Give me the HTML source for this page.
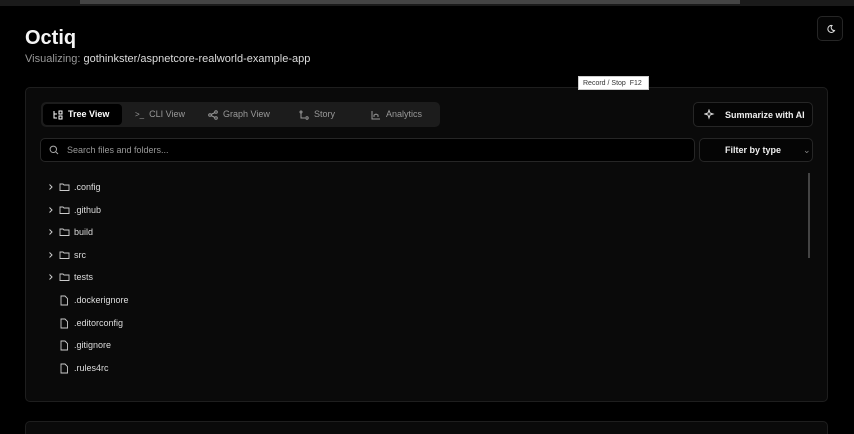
<!DOCTYPE html>
<html style="height:434px;overflow:hidden"><head><style>
*{box-sizing:border-box;margin:0;padding:0}
body{width:854px;height:434px;background:#000;font-family:"Liberation Sans",sans-serif;color:#eee;position:relative;overflow:hidden}
.abs{position:absolute}
.topbar{left:0;top:0;width:854px;height:6px;background:#1a1a1a}
.topbar2{left:80px;top:0;width:660px;height:4px;background:#444}
h1{position:absolute;left:25px;top:27px;font-size:20px;font-weight:bold;color:#f5f5f5}
.sub{left:25px;top:53px;font-size:11px;color:#999}
.sub b{color:#ddd;font-weight:normal}
.moon{left:817px;top:16px;width:26px;height:25px;border:1px solid #262626;border-radius:5px;background:#050505}
.tip{left:578px;top:76px;width:71px;height:14px;background:#fff;color:#333;font-size:7px;line-height:13px;padding-left:4px;border:1px solid #ccc}
.card{left:25px;top:87px;width:803px;height:315px;background:#0a0a0a;border:1px solid #1e1e1e;border-radius:5px}
.card2{left:25px;top:421px;width:803px;height:13px;background:#0a0a0a;border:1px solid #1e1e1e;border-bottom:none;border-radius:5px 5px 0 0}
.tabs{left:41px;top:102px;width:399px;height:25px;background:#1c1c1c;border-radius:5px}
.tab{position:absolute;top:2px;height:21px;font-size:9px;color:#999;line-height:21px;display:flex;align-items:center;gap:5px}
.tab.act{background:#000;color:#fff;font-weight:bold;border-radius:4px;left:2px;width:79px;padding-left:10px}
.btn{border:1px solid #262626;border-radius:5px;background:#050505;font-size:9px;font-weight:bold;color:#eee;display:flex;align-items:center}
.search{left:40px;top:138px;width:655px;height:24px;border:1px solid #262626;border-radius:5px;background:#000;font-size:9px;color:#999;display:flex;align-items:center;padding-left:8px;gap:8px}
.row{position:absolute;left:46px;font-size:9px;color:#ddd;display:flex;align-items:center;height:12px}
.row svg{flex:none}
.sb{left:808px;top:173px;width:2px;height:85px;background:#444}
</style></head><body>
<div class="abs topbar"></div><div class="abs topbar2"></div>
<h1>Octiq</h1>
<div class="abs sub">Visualizing: <b>gothinkster/aspnetcore-realworld-example-app</b></div>
<div class="abs moon"><svg width="24" height="23" viewBox="0 0 24 23"><path d="M14 8.5a3.5 3.5 0 1 0 2.5 5A3 3 0 0 1 14 8.5z" fill="none" stroke="#ddd" stroke-width="1"/></svg></div>
<div class="abs card"></div>
<div class="abs card2"></div>
<div class="abs tip">Record / Stop &nbsp;F12</div>
<div class="abs tabs">
 <div class="tab act"><svg width="10" height="10" viewBox="0 0 10 10" fill="none" stroke="#fff" stroke-width="1"><path d="M1 1v7h3M1 4h3M6 1h3v3H6zM6 6h3v3H6z"/></svg>Tree View</div>
 <div class="tab" style="left:94px"><span style="font-size:8px">&gt;_</span> CLI View</div>
 <div class="tab" style="left:167px"><svg width="10" height="10" viewBox="0 0 10 10" fill="none" stroke="#999" stroke-width="1"><circle cx="2" cy="5" r="1.3"/><circle cx="8" cy="2" r="1.3"/><circle cx="8" cy="8" r="1.3"/><path d="M3 4.5l4-2M3 5.5l4 2"/></svg>Graph View</div>
 <div class="tab" style="left:258px"><svg width="10" height="10" viewBox="0 0 10 10" fill="none" stroke="#999" stroke-width="1"><circle cx="2" cy="2" r="1"/><circle cx="8" cy="8" r="1.2"/><path d="M2 3v5h4"/></svg>Story</div>
 <div class="tab" style="left:330px"><svg width="10" height="10" viewBox="0 0 10 10" fill="none" stroke="#999" stroke-width="1"><path d="M1 1v8h8M3 7V5l2-1 2 1v2"/></svg>Analytics</div>
</div>
<div class="abs btn" style="left:693px;top:102px;width:120px;height:25px;padding-left:10px;gap:10px"><svg width="11" height="11" viewBox="0 0 11 11" fill="none" stroke="#ddd" stroke-width="1"><path d="M5 1l1 3 3 1-3 1-1 3-1-3-3-1 3-1z"/></svg>Summarize with AI</div>
<div class="abs search"><svg width="10" height="10" viewBox="0 0 10 10" fill="none" stroke="#aaa" stroke-width="1"><circle cx="4.3" cy="4.3" r="3.2"/><path d="M6.8 6.8L9 9"/></svg>Search files and folders...</div>
<div class="abs btn" style="left:699px;top:138px;width:114px;height:24px;padding-left:25px;justify-content:flex-start">Filter by type<span style="margin-left:22px;color:#888;font-weight:normal">&#8964;</span></div>
<div class="abs sb"></div>
<div class="row" style="top:181px"><svg width="10" height="10" viewBox="0 0 10 10"><path d="M3.5 2.5l2.5 2.5-2.5 2.5" stroke="#ccc" fill="none"/></svg><svg style="margin-left:3px" width="11" height="10" viewBox="0 0 11 10"><path d="M1 2h3l1 1h5v5.5H1z" stroke="#ccc" fill="none" stroke-width=".9"/></svg><span style="margin-left:4px">.config</span></div>
<div class="row" style="top:204px"><svg width="10" height="10" viewBox="0 0 10 10"><path d="M3.5 2.5l2.5 2.5-2.5 2.5" stroke="#ccc" fill="none"/></svg><svg style="margin-left:3px" width="11" height="10" viewBox="0 0 11 10"><path d="M1 2h3l1 1h5v5.5H1z" stroke="#ccc" fill="none" stroke-width=".9"/></svg><span style="margin-left:4px">.github</span></div>
<div class="row" style="top:226px"><svg width="10" height="10" viewBox="0 0 10 10"><path d="M3.5 2.5l2.5 2.5-2.5 2.5" stroke="#ccc" fill="none"/></svg><svg style="margin-left:3px" width="11" height="10" viewBox="0 0 11 10"><path d="M1 2h3l1 1h5v5.5H1z" stroke="#ccc" fill="none" stroke-width=".9"/></svg><span style="margin-left:4px">build</span></div>
<div class="row" style="top:249px"><svg width="10" height="10" viewBox="0 0 10 10"><path d="M3.5 2.5l2.5 2.5-2.5 2.5" stroke="#ccc" fill="none"/></svg><svg style="margin-left:3px" width="11" height="10" viewBox="0 0 11 10"><path d="M1 2h3l1 1h5v5.5H1z" stroke="#ccc" fill="none" stroke-width=".9"/></svg><span style="margin-left:4px">src</span></div>
<div class="row" style="top:271px"><svg width="10" height="10" viewBox="0 0 10 10"><path d="M3.5 2.5l2.5 2.5-2.5 2.5" stroke="#ccc" fill="none"/></svg><svg style="margin-left:3px" width="11" height="10" viewBox="0 0 11 10"><path d="M1 2h3l1 1h5v5.5H1z" stroke="#ccc" fill="none" stroke-width=".9"/></svg><span style="margin-left:4px">tests</span></div>
<div class="row" style="top:294px;left:59px"><svg width="10" height="11" viewBox="0 0 10 11"><path d="M2 1h4l2.5 2.5V10H2z" stroke="#ccc" fill="none" stroke-width=".9"/></svg><span style="margin-left:5px">.dockerignore</span></div>
<div class="row" style="top:317px;left:59px"><svg width="10" height="11" viewBox="0 0 10 11"><path d="M2 1h4l2.5 2.5V10H2z" stroke="#ccc" fill="none" stroke-width=".9"/></svg><span style="margin-left:5px">.editorconfig</span></div>
<div class="row" style="top:339px;left:59px"><svg width="10" height="11" viewBox="0 0 10 11"><path d="M2 1h4l2.5 2.5V10H2z" stroke="#ccc" fill="none" stroke-width=".9"/></svg><span style="margin-left:5px">.gitignore</span></div>
<div class="row" style="top:362px;left:59px"><svg width="10" height="11" viewBox="0 0 10 11"><path d="M2 1h4l2.5 2.5V10H2z" stroke="#ccc" fill="none" stroke-width=".9"/></svg><span style="margin-left:5px">.rules4rc</span></div>
</body></html>
